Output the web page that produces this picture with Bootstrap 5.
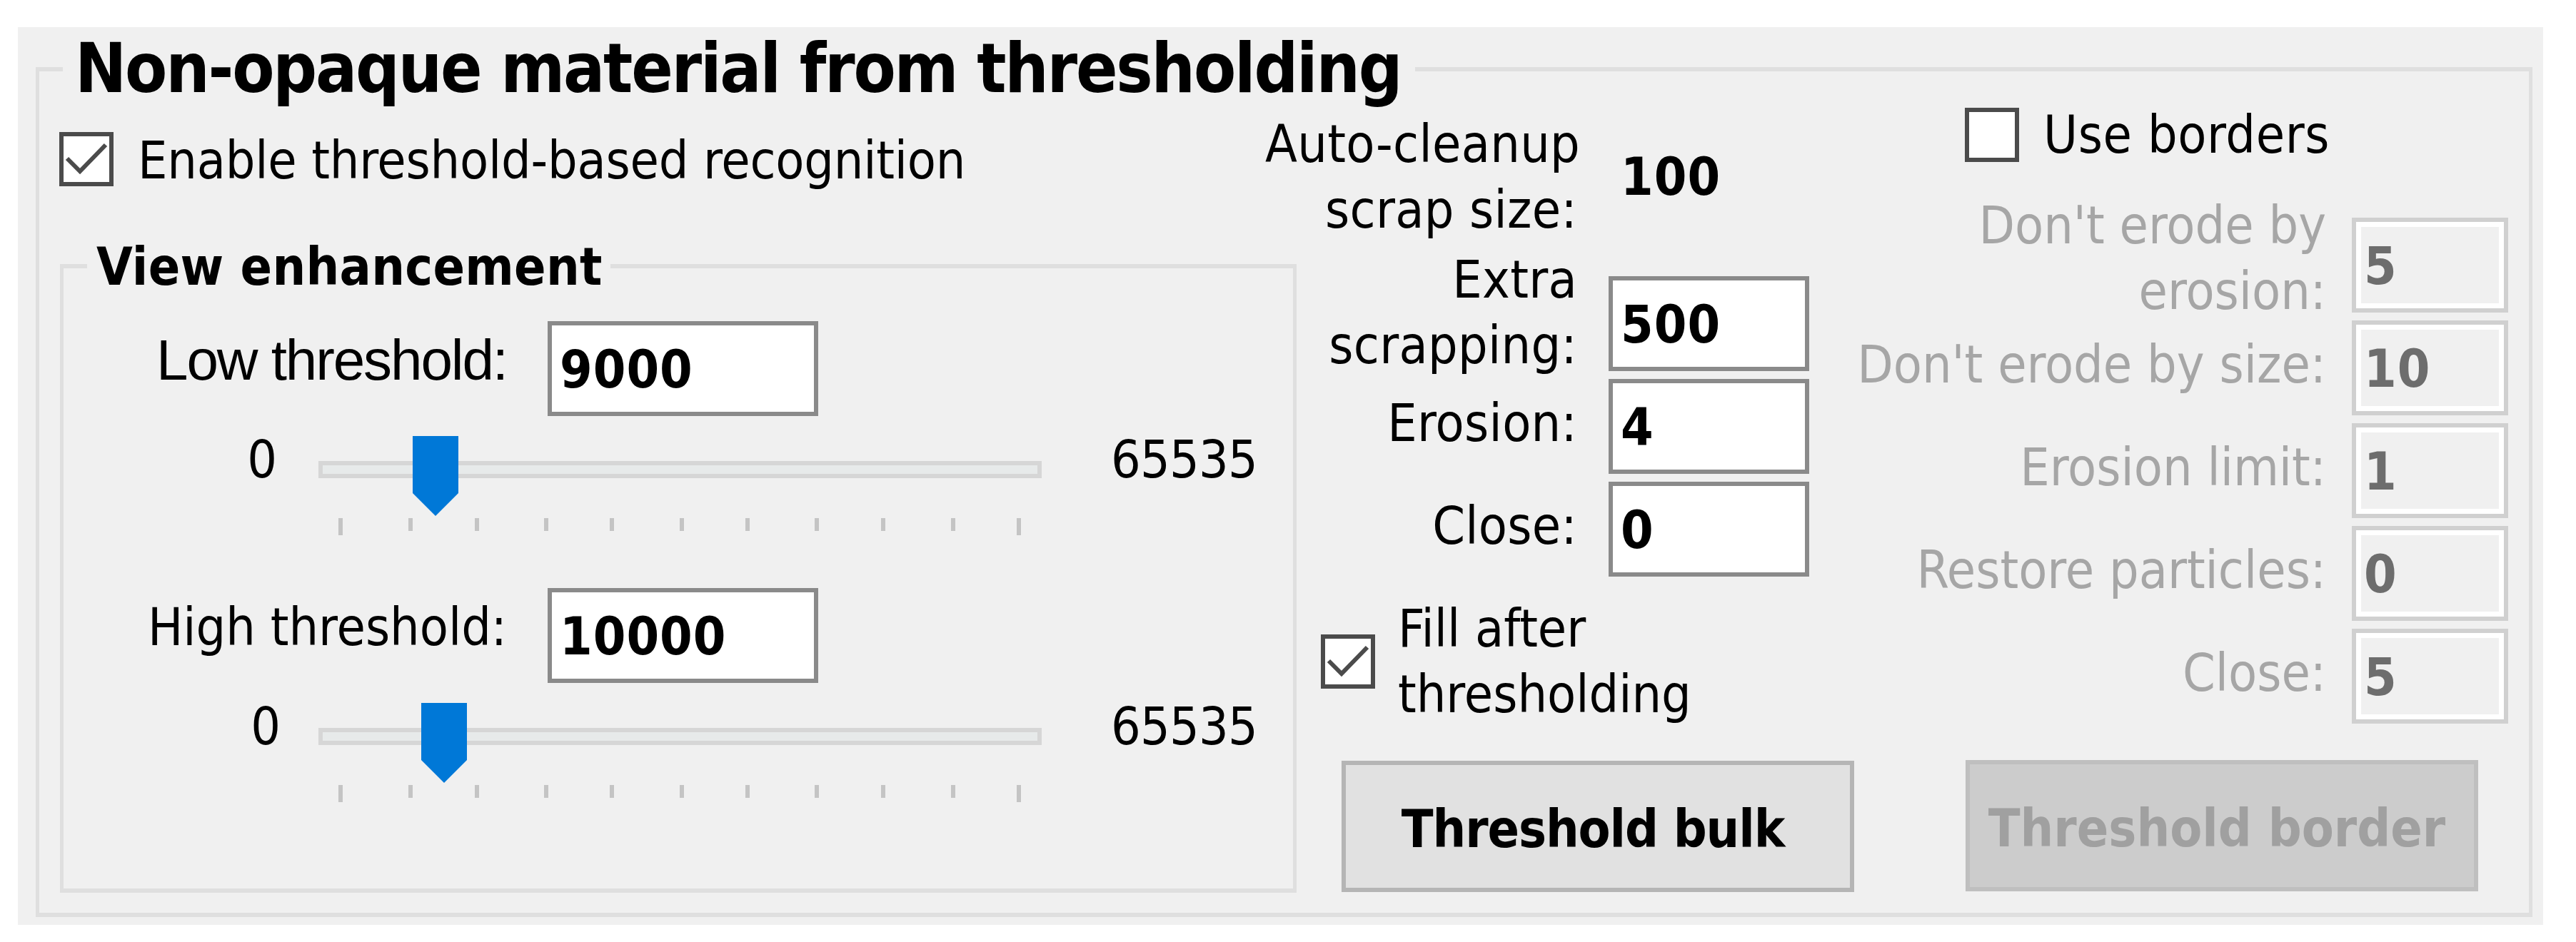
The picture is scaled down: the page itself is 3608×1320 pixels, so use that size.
<!DOCTYPE html>
<html lang="en">
  <head>
    <meta charset="UTF-8" />
    <meta name="viewport" content="width=device-width, initial-scale=1.0" />
    <title>Non-opaque material from thresholding</title>
    <!-- Bootstrap CSS -->
    <link href="https://cdn.jsdelivr.net/npm/bootstrap@5.3.0/dist/css/bootstrap.min.css" rel="stylesheet" />
    <style>
      body {
        font-family: "DejaVu Sans Condensed", "DejaVu Sans", sans-serif;
        font-stretch: condensed;
        font-size: 73px;
        line-height: 92px;
        color: #000;
        background-color: #fff;
      }

      .settings-panel {
        width: 3537px;
        height: 1258px;
        margin: 38px 0 0 25px;
        padding: 56px 15px 11px 25px;
        background-color: #f0f0f0;
      }

      /* Group boxes: the title sits on the top border */
      .group-box {
        border: 6px solid #dfdfdf;
        border-left-width: 5px;
        border-right-width: 5px;
      }

      .group-title {
        padding-left: 13px;
        background-color: #f0f0f0;
        font-weight: bold;
        white-space: nowrap;
      }

      .title-main {
        width: 1894px;
        margin: -52px 0 0 33px;
        padding-left: 17px;
        font-size: 96px;
        line-height: 96px;
        letter-spacing: -2.2px;
      }

      .title-view {
        width: 733px;
        margin: -42px 0 0 33px;
        font-size: 73px;
        line-height: 80px;
        letter-spacing: 0.3px;
      }

      .view-box {
        height: 881px;
        margin: 109px 0 0 1px;
      }

      /* Columns */
      .left-col {
        width: 1761px;
        padding: 41px 0 0 28px;
      }

      .middle-col {
        width: 784px;
        padding-top: 12px;
      }

      .right-col {
        width: 941px;
        padding-top: 7px;
      }

      /* Check boxes */
      .check-row {
        gap: 34px;
        height: 76px;
      }

      .check-box {
        flex: none;
        width: 76px;
        height: 76px;
      }

      .check-row.fill-row {
        gap: 32px;
        height: 184px;
        margin: 27px 0 0 34px;
      }

      .check-row.borders-row {
        margin-left: 152px;
      }

      .tight-text {
        letter-spacing: -0.2px;
      }

      .wide-text {
        letter-spacing: 0.6px;
      }

      /* Label + value rows */
      .field-row {
        height: 133px;
      }

      .field-row + .field-row {
        margin-top: 11px;
      }

      .field-label {
        padding-bottom: 10px;
        text-align: right;
        white-space: nowrap;
      }

      .middle-col .field-label {
        width: 393px;
        margin-right: 44px;
        letter-spacing: 0.3px;
      }

      .right-col .field-label {
        width: 658px;
        margin-right: 36px;
        color: #a6a6a6;
      }

      .view-box .field-label {
        width: 621px;
        margin-right: 57px;
        padding-bottom: 24px;
      }

      .cleanup-row {
        height: 184px;
        margin-bottom: 47px;
      }

      /* The first label is wider than its column */
      .middle-col .cleanup-row .field-label {
        width: 437px;
        margin-left: -44px;
        padding-bottom: 0;
      }

      .label-extra.field-label {
        padding-bottom: 32px;
      }

      .label-erode.field-label {
        padding-bottom: 20px;
      }

      .label-low {
        font-family: "Liberation Sans", Arial, sans-serif;
        font-size: 80px;
        letter-spacing: -2.1px;
      }

      .field-value {
        padding-left: 17px;
        font-weight: bold;
        letter-spacing: 1px;
      }

      .value-input.form-control {
        flex: none;
        width: 281px;
        height: 133px;
        padding: 2px 0 0 11px;
        border: 6px solid #8a8a8a;
        border-radius: 0;
        font-size: 73px;
        font-weight: bold;
        letter-spacing: 1px;
        color: #000;
        background-color: #fff;
      }

      .view-box .value-input.form-control {
        width: 379px;
      }

      .right-col .value-input.form-control {
        width: 219px;
        border-color: #d0d0d0;
        box-shadow: inset 0 0 0 7px #fff;
        color: #6d6d6d;
        background-color: #f0f0f0;
      }

      .border-fields {
        margin-top: 78px;
      }

      /* Sliders */
      .slider-block {
        margin-top: 36px;
      }

      .slider-block + .slider-block {
        margin-top: 74px;
      }

      .slider-row {
        margin-top: 28px;
        line-height: 66px;
      }

      .slider-min {
        width: 299px;
        margin-right: 58px;
        text-align: right;
      }

      .slider-block + .slider-block .slider-min {
        width: 304px;
        margin-right: 53px;
      }

      .slider-max {
        margin-left: 97px;
        letter-spacing: -0.8px;
      }

      /* Buttons */
      .action-btn.btn {
        width: 718px;
        height: 184px;
        padding: 7px 14px 0 0;
        border: 6px solid #b5b5b5;
        border-radius: 0;
        font-size: 73px;
        font-weight: bold;
        line-height: 92px;
        white-space: nowrap;
        color: #000;
        background-color: #e1e1e1;
      }

      .bulk-btn {
        margin: 47px 0 0 63px;
        letter-spacing: -1.1px;
      }

      .border-btn.btn {
        margin: 51px 0 0 153px;
        border-color: #bfbfbf;
        color: #a0a0a0;
        background-color: #ccc;
        opacity: 1;
      }
    </style>
  </head>
  <body>
    <main class="settings-panel">
      <section class="group-box h-100">
        <h1 class="group-title title-main">Non-opaque material from thresholding</h1>

        <div class="d-flex align-items-start">
          <div class="left-col">
            <div class="check-row d-flex align-items-center">
              <svg class="check-box" viewBox="0 0 76 76">
                <rect x="3" y="3" width="70" height="70" fill="#fff" stroke="#4b4b4b" stroke-width="6" />
                <path d="M11 37 L29 55 L65 18" fill="none" stroke="#4b4b4b" stroke-width="6" />
              </svg>
              <span class="tight-text pt-1">Enable threshold-based recognition</span>
            </div>

            <div class="group-box view-box">
              <h2 class="group-title title-view">View enhancement</h2>

              <div class="slider-block">
                <div class="field-row d-flex align-items-center">
                  <label class="field-label label-low" for="lowThreshold">Low threshold:</label>
                  <input class="form-control value-input" id="lowThreshold" type="text" value="9000" />
                </div>
                <div class="slider-row d-flex align-items-start">
                  <span class="slider-min">0</span>
                  <svg width="1013" height="139" viewBox="0 0 1013 139">
                    <rect x="3" y="38" width="1007" height="18" fill="#e7eaea" stroke="#d6d6d6" stroke-width="6" />
                    <path d="M132 0 H196 V80 L164 112 L132 80 Z" fill="#0078d7" />
                    <path d="M31 115 V139 M129 115 V133 M222 115 V133 M319 115 V133 M411 115 V133 M509 115 V133 M601 115 V133 M698 115 V133 M791 115 V133 M889 115 V133 M981 115 V139" stroke="#c4c4c4" stroke-width="6" />
                  </svg>
                  <span class="slider-max">65535</span>
                </div>
              </div>

              <div class="slider-block">
                <div class="field-row d-flex align-items-center">
                  <label class="field-label" for="highThreshold">High threshold:</label>
                  <input class="form-control value-input" id="highThreshold" type="text" value="10000" />
                </div>
                <div class="slider-row d-flex align-items-start">
                  <span class="slider-min">0</span>
                  <svg width="1013" height="139" viewBox="0 0 1013 139">
                    <rect x="3" y="38" width="1007" height="18" fill="#e7eaea" stroke="#d6d6d6" stroke-width="6" />
                    <path d="M144 0 H208 V80 L176 112 L144 80 Z" fill="#0078d7" />
                    <path d="M31 115 V139 M129 115 V133 M222 115 V133 M319 115 V133 M411 115 V133 M509 115 V133 M601 115 V133 M698 115 V133 M791 115 V133 M889 115 V133 M981 115 V139" stroke="#c4c4c4" stroke-width="6" />
                  </svg>
                  <span class="slider-max">65535</span>
                </div>
              </div>
            </div>
          </div>

          <div class="middle-col">
            <div class="cleanup-row d-flex align-items-center">
              <span class="field-label">Auto-cleanup<br />scrap size:</span>
              <span class="field-value">100</span>
            </div>
            <div class="field-row d-flex align-items-center">
              <label class="field-label label-extra" for="extraScrapping">Extra<br />scrapping:</label>
              <input class="form-control value-input" id="extraScrapping" type="text" value="500" />
            </div>
            <div class="field-row d-flex align-items-center">
              <label class="field-label" for="erosion">Erosion:</label>
              <input class="form-control value-input" id="erosion" type="text" value="4" />
            </div>
            <div class="field-row d-flex align-items-center">
              <label class="field-label" for="closeBulk">Close:</label>
              <input class="form-control value-input" id="closeBulk" type="text" value="0" />
            </div>

            <div class="check-row fill-row d-flex align-items-center">
              <svg class="check-box" viewBox="0 0 76 76">
                <rect x="3" y="3" width="70" height="70" fill="#fff" stroke="#4b4b4b" stroke-width="6" />
                <path d="M11 37 L29 55 L65 18" fill="none" stroke="#4b4b4b" stroke-width="6" />
              </svg>
              <span>Fill after<br />thresholding</span>
            </div>

            <button class="btn action-btn bulk-btn" type="button">Threshold bulk</button>
          </div>

          <div class="right-col">
            <div class="check-row borders-row d-flex align-items-center">
              <svg class="check-box" viewBox="0 0 76 76">
                <rect x="3" y="3" width="70" height="70" fill="#fff" stroke="#4b4b4b" stroke-width="6" />
              </svg>
              <span class="wide-text">Use borders</span>
            </div>

            <div class="border-fields">
              <div class="field-row d-flex align-items-center">
                <label class="field-label label-erode" for="erodeErosion">Don't erode by<br />erosion:</label>
                <input class="form-control value-input" id="erodeErosion" type="text" value="5" disabled />
              </div>
              <div class="field-row d-flex align-items-center">
                <label class="field-label" for="erodeSize">Don't erode by size:</label>
                <input class="form-control value-input" id="erodeSize" type="text" value="10" disabled />
              </div>
              <div class="field-row d-flex align-items-center">
                <label class="field-label" for="erosionLimit">Erosion limit:</label>
                <input class="form-control value-input" id="erosionLimit" type="text" value="1" disabled />
              </div>
              <div class="field-row d-flex align-items-center">
                <label class="field-label" for="restoreParticles">Restore particles:</label>
                <input class="form-control value-input" id="restoreParticles" type="text" value="0" disabled />
              </div>
              <div class="field-row d-flex align-items-center">
                <label class="field-label" for="closeBorder">Close:</label>
                <input class="form-control value-input" id="closeBorder" type="text" value="5" disabled />
              </div>
            </div>

            <button class="btn action-btn border-btn" type="button" disabled>Threshold border</button>
          </div>
        </div>
      </section>
    </main>

    <script src="https://cdn.jsdelivr.net/npm/bootstrap@5.3.0/dist/js/bootstrap.bundle.min.js"></script>
  </body>
</html>
